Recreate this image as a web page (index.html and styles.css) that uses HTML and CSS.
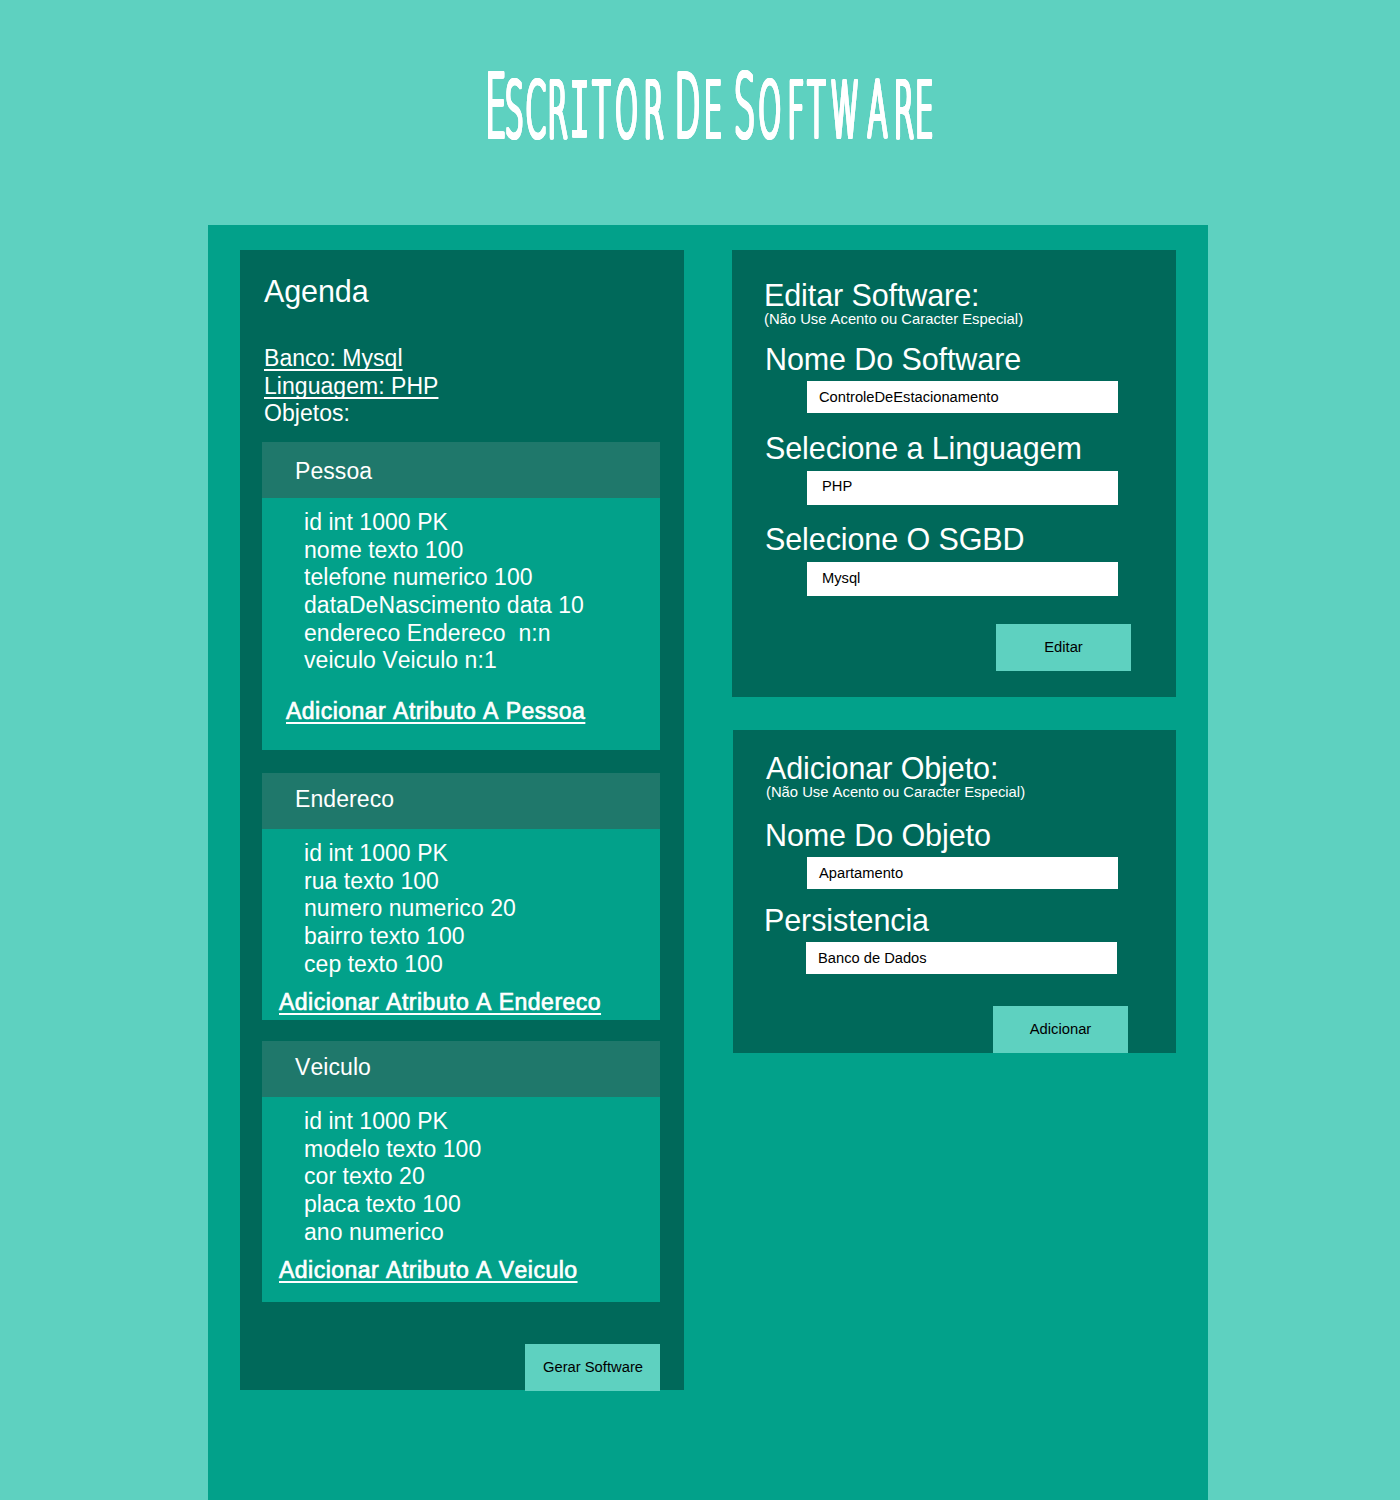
FILE: index.html
```html
<!DOCTYPE html>
<html lang="pt-BR">
<head>
<meta charset="utf-8">
<title>Escritor De Software</title>
<link rel="stylesheet" href="styles.css">
</head>
<body>
<header class="site-header">
  <h1 class="brand">
    <svg class="brand-svg" viewBox="0 0 460 100" width="460" height="100">
      <text class="brand-text" transform="scale(.38 1)" y="77" x="40 89 145 203 261 318 384 456 500 545 612 658 695 761 830 884 959 1045 1114 1168"><tspan class="cap">E</tspan>scr<tspan class="slab">i</tspan>tor <tspan class="cap">D</tspan>e <tspan class="cap">S</tspan>oftware</text>
    </svg>
  </h1>
</header>
<main class="workspace">
  <section class="panel project">
    <h2 class="heading">Agenda</h2>
    <div class="meta">
      <div><a class="link">Banco: Mysql</a></div>
      <div><a class="link">Linguagem: PHP</a></div>
      <div>Objetos:</div>
    </div>
    <article class="card pessoa">
      <h3 class="card-title">Pessoa</h3>
      <ul class="attrs">
        <li>id int 1000 PK</li>
        <li>nome texto 100</li>
        <li>telefone numerico 100</li>
        <li>dataDeNascimento data 10</li>
        <li>endereco Endereco&nbsp; n:n</li>
        <li>veiculo Veiculo n:1</li>
      </ul>
      <a class="link add">Adicionar Atributo A Pessoa</a>
    </article>
    <article class="card endereco">
      <h3 class="card-title">Endereco</h3>
      <ul class="attrs">
        <li>id int 1000 PK</li>
        <li>rua texto 100</li>
        <li>numero numerico 20</li>
        <li>bairro texto 100</li>
        <li>cep texto 100</li>
      </ul>
      <a class="link add">Adicionar Atributo A Endereco</a>
    </article>
    <article class="card veiculo">
      <h3 class="card-title">Veiculo</h3>
      <ul class="attrs">
        <li>id int 1000 PK</li>
        <li>modelo texto 100</li>
        <li>cor texto 20</li>
        <li>placa texto 100</li>
        <li>ano numerico</li>
      </ul>
      <a class="link add">Adicionar Atributo A Veiculo</a>
    </article>
    <button class="button generate">Gerar Software</button>
  </section>
  <div class="forms">
    <section class="panel edit">
      <h2 class="heading">Editar Software:</h2>
      <p class="hint">(Não Use Acento ou Caracter Especial)</p>
      <div class="label name-label">Nome Do Software</div>
      <div class="field">ControleDeEstacionamento</div>
      <div class="label lang-label">Selecione a Linguagem</div>
      <div class="field select lang">PHP</div>
      <div class="label db-label">Selecione O SGBD</div>
      <div class="field select">Mysql</div>
      <button class="button">Editar</button>
    </section>
    <section class="panel object">
      <h2 class="heading">Adicionar Objeto:</h2>
      <p class="hint">(Não Use Acento ou Caracter Especial)</p>
      <div class="label object-label">Nome Do Objeto</div>
      <div class="field">Apartamento</div>
      <div class="label persist-label">Persistencia</div>
      <div class="field persist">Banco de Dados</div>
      <button class="button">Adicionar</button>
    </section>
  </div>
</main>
</body>
</html>
```
FILE: styles.css
```css
* { box-sizing: border-box; }
body {
  margin: 0;
  background: #5ed1c0;
  color: #fff;
  font-family: "Liberation Sans", Arial, sans-serif;
  font-kerning: none;
}
h1, h2, h3, p, ul { margin: 0; padding: 0; font-weight: 400; }
ul { list-style: none; }

.site-header { height: 225px; padding: 60px 0 0 480px; }
.brand { line-height: 0; }
.brand-svg { overflow: visible; filter: drop-shadow(1px 0 0 #fff) drop-shadow(.5px 0 0 #fff); }
.brand-text {
  font-family: "DejaVu Sans", sans-serif;
  font-weight: 200;
  font-size: 77px;
  text-anchor: middle;
  text-transform: uppercase;
  fill: #fff;
  stroke: #fff;
  stroke-width: 4px;
  stroke-linejoin: round;
  stroke-linecap: round;
}
.brand-text .cap { font-size: 88px; }
.brand-text .slab { font-family: "Liberation Mono", monospace; font-size: 86px; stroke-width: 1px; }

.workspace {
  display: flex;
  align-items: flex-start;
  gap: 48px;
  width: 1000px;
  height: 1275px;
  margin-left: 208px;
  padding: 25px 32px 0;
  background: #02a18a;
}
.panel { background: #00695a; }
.heading, .label { font-size: 30.5px; line-height: 34px; letter-spacing: -.1px; white-space: nowrap; }
.link { text-decoration: underline; text-decoration-thickness: 2px; text-underline-offset: 3px; text-decoration-skip-ink: none; }

.project { display: flex; flex-direction: column; width: 444px; height: 1140px; padding: 24px 24px 0 22px; }
.project .heading { padding-left: 2px; }
.meta { margin-top: 37px; padding-left: 2px; font-size: 23px; line-height: 27.6px; letter-spacing: .04px; }
.card { display: flex; flex-direction: column; align-items: flex-start; background: #02a18a; font-size: 23px; flex-shrink: 0; }
.pessoa { height: 308px; margin-top: 14.2px; }
.endereco { height: 247px; margin-top: 23px; }
.veiculo { height: 261px; margin-top: 21px; }
.card-title { width: 100%; height: 56px; padding: 13px 0 0 33px; background: #1f786b; font-size: 23px; line-height: 26px; letter-spacing: .08px; }
.pessoa .card-title { padding-top: 16px; }
.attrs { padding: 11.2px 0 0 42px; line-height: 27.6px; letter-spacing: .05px; }
.add { margin: 11.3px 0 0 17px; line-height: 26px; letter-spacing: .48px; -webkit-text-stroke: .7px #fff; }
.pessoa .add { margin: 23.3px 0 0 24px; }
.veiculo .add { margin-top: 10.8px; }
.button {
  display: block;
  width: 135px;
  height: 47px;
  padding: 0 0 1px;
  border: 0;
  background: #5ed1c0;
  color: #000;
  font: 14.75px/16px "Liberation Sans", Arial, sans-serif;
  font-kerning: none;
}
.generate { align-self: flex-end; flex-shrink: 0; margin-top: 42px; padding: 0 0 0 1px; }

.forms { display: flex; flex-direction: column; gap: 33px; width: 444px; }
.edit { height: 447px; padding: 28px 0 0 32px; }
.object { width: 443px; height: 323px; margin-left: 1px; padding: 21px 0 0 32px; }
.hint { font-size: 14.8px; line-height: 16px; margin-top: -1px; }
.object .hint, .object .heading { padding-left: 1px; }
.label { padding-left: 1px; }
.name-label { margin-top: 15px; }
.lang-label { margin-top: 18px; }
.db-label { margin-top: 17px; }
.object-label { margin-top: 18px; padding-left: 0; }
.persist-label { margin: 14px 0 0 -1px; padding-left: 0; }
.field {
  width: 311.4px;
  height: 32px;
  margin: 5px 0 0 43px;
  padding: 8px 12px;
  background: #fff;
  color: #000;
  font-size: 14.7px;
  line-height: 16px;
}
.object .field { margin-left: 42px; }
.object .persist { margin-left: 41px; }
.select { width: 311px; height: 34px; margin-top: 6px; padding: 8px 15px; }
.lang { padding-top: 7px; }
.edit .lang { margin-top: 6px; }
.edit .button { margin: 28px 0 0 232px; }
.object .button { margin: 32px 0 0 228px; }
```
